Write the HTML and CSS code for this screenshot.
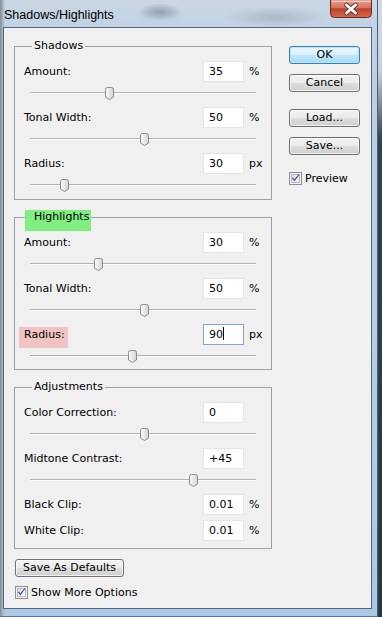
FILE: index.html
```html
<!DOCTYPE html>
<html lang="en">
<head>
  <meta charset="UTF-8" />
  <title>Shadows/Highlights</title>
  <link rel="stylesheet" href="styles.css">
</head>
<body>
  <svg class="defs" width="0" height="0" aria-hidden="true">
    <defs>
      <linearGradient id="thumbFill" x1="0" y1="0" x2="1" y2="0">
        <stop offset="0" stop-color="#fdfdfd" />
        <stop offset="1" stop-color="#d2d2d2" />
      </linearGradient>
      <linearGradient id="boxFill" x1="0" y1="0" x2="1" y2="1">
        <stop offset="0" stop-color="#d9dadc" />
        <stop offset="1" stop-color="#ffffff" />
      </linearGradient>
      <linearGradient id="closeFill" x1="0" y1="0" x2="0" y2="1">
        <stop offset="0" stop-color="#e8a593" />
        <stop offset="0.45" stop-color="#d0725e" />
        <stop offset="0.5" stop-color="#c2402a" />
        <stop offset="1" stop-color="#d46a4c" />
      </linearGradient>
    </defs>
  </svg>

  <div class="window">
    <div class="titlebar">
      <span class="title">Shadows/Highlights</span>
      <span class="close-btn" aria-label="Close">
        <svg width="42" height="18" viewBox="0 0 42 18">
          <path d="M0.5 0 V13.5 Q0.5 17.5 4.5 17.5 H37.5 Q41.5 17.5 41.5 13.5 V0" fill="url(#closeFill)" stroke="#6d2b20" />
          <path d="M2 1.5 H40" stroke="#f3c8bb" stroke-width="1" />
          <path d="M16.5 5 L25.5 13 M25.5 5 L16.5 13" stroke="#5a3a34" stroke-width="4.6" stroke-linecap="round" />
          <path d="M16.5 5 L25.5 13 M25.5 5 L16.5 13" stroke="#ffffff" stroke-width="2.8" stroke-linecap="round" />
        </svg>
      </span>
    </div>

    <div class="client">
      <div class="main">
        <fieldset class="group">
          <legend>Shadows</legend>
          <div class="field"><span class="label">Amount:</span><span class="box">35</span><span class="unit">%</span></div>
          <div class="slider"><div class="track"></div><span class="thumb" style="left: 35%"><svg width="9" height="13" viewBox="0 0 9 13"><path d="M0.5 2.5 Q0.5 0.5 2.5 0.5 H6.5 Q8.5 0.5 8.5 2.5 V10 L4.5 12.5 L0.5 10 Z" fill="url(#thumbFill)" stroke="#8a8a8a" /></svg></span></div>
          <div class="field"><span class="label">Tonal Width:</span><span class="box">50</span><span class="unit">%</span></div>
          <div class="slider"><div class="track"></div><span class="thumb" style="left: 50.4%"><svg width="9" height="13" viewBox="0 0 9 13"><path d="M0.5 2.5 Q0.5 0.5 2.5 0.5 H6.5 Q8.5 0.5 8.5 2.5 V10 L4.5 12.5 L0.5 10 Z" fill="url(#thumbFill)" stroke="#8a8a8a" /></svg></span></div>
          <div class="field"><span class="label">Radius:</span><span class="box">30</span><span class="unit">px</span></div>
          <div class="slider"><div class="track"></div><span class="thumb" style="left: 15%"><svg width="9" height="13" viewBox="0 0 9 13"><path d="M0.5 2.5 Q0.5 0.5 2.5 0.5 H6.5 Q8.5 0.5 8.5 2.5 V10 L4.5 12.5 L0.5 10 Z" fill="url(#thumbFill)" stroke="#8a8a8a" /></svg></span></div>
        </fieldset>

        <fieldset class="group">
          <legend class="mark-green">Highlights</legend>
          <div class="field"><span class="label">Amount:</span><span class="box">30</span><span class="unit">%</span></div>
          <div class="slider"><div class="track"></div><span class="thumb" style="left: 30%"><svg width="9" height="13" viewBox="0 0 9 13"><path d="M0.5 2.5 Q0.5 0.5 2.5 0.5 H6.5 Q8.5 0.5 8.5 2.5 V10 L4.5 12.5 L0.5 10 Z" fill="url(#thumbFill)" stroke="#8a8a8a" /></svg></span></div>
          <div class="field"><span class="label">Tonal Width:</span><span class="box">50</span><span class="unit">%</span></div>
          <div class="slider"><div class="track"></div><span class="thumb" style="left: 50.4%"><svg width="9" height="13" viewBox="0 0 9 13"><path d="M0.5 2.5 Q0.5 0.5 2.5 0.5 H6.5 Q8.5 0.5 8.5 2.5 V10 L4.5 12.5 L0.5 10 Z" fill="url(#thumbFill)" stroke="#8a8a8a" /></svg></span></div>
          <div class="field"><span class="label marked"><span class="mark-pink">Radius:</span></span><span class="box focused">90<span class="caret"></span></span><span class="unit">px</span></div>
          <div class="slider short"><div class="track"></div><span class="thumb" style="left: 45%"><svg width="9" height="13" viewBox="0 0 9 13"><path d="M0.5 2.5 Q0.5 0.5 2.5 0.5 H6.5 Q8.5 0.5 8.5 2.5 V10 L4.5 12.5 L0.5 10 Z" fill="url(#thumbFill)" stroke="#8a8a8a" /></svg></span></div>
        </fieldset>

        <fieldset class="group last">
          <legend>Adjustments</legend>
          <div class="field"><span class="label">Color Correction:</span><span class="box">0</span><span class="unit"></span></div>
          <div class="slider"><div class="track"></div><span class="thumb" style="left: 50.4%"><svg width="9" height="13" viewBox="0 0 9 13"><path d="M0.5 2.5 Q0.5 0.5 2.5 0.5 H6.5 Q8.5 0.5 8.5 2.5 V10 L4.5 12.5 L0.5 10 Z" fill="url(#thumbFill)" stroke="#8a8a8a" /></svg></span></div>
          <div class="field"><span class="label">Midtone Contrast:</span><span class="box">+45</span><span class="unit"></span></div>
          <div class="slider"><div class="track"></div><span class="thumb" style="left: 72%"><svg width="9" height="13" viewBox="0 0 9 13"><path d="M0.5 2.5 Q0.5 0.5 2.5 0.5 H6.5 Q8.5 0.5 8.5 2.5 V10 L4.5 12.5 L0.5 10 Z" fill="url(#thumbFill)" stroke="#8a8a8a" /></svg></span></div>
          <div class="field"><span class="label">Black Clip:</span><span class="box">0.01</span><span class="unit">%</span></div>
          <div class="field clip"><span class="label">White Clip:</span><span class="box">0.01</span><span class="unit">%</span></div>
        </fieldset>

        <button class="btn defaults">Save As Defaults</button>
        <label class="check more">
          <svg width="13" height="13" viewBox="0 0 13 13"><rect x="0.5" y="0.5" width="12" height="12" fill="#f4f4f4" stroke="#8f8f8f" /><rect x="2.5" y="2.5" width="8" height="8" fill="url(#boxFill)" stroke="#b9b9b9" /><path d="M3 6.2 L5.4 9.6 L10.6 2.6 L9.6 2.2 L5.3 7.6 L4.1 5.5 Z" fill="#3a4f9c" /></svg>
          Show More Options
        </label>
      </div>

      <div class="side">
        <button class="btn primary">OK</button>
        <button class="btn cancel">Cancel</button>
        <button class="btn load">Load...</button>
        <button class="btn save">Save...</button>
        <label class="check preview">
          <svg width="13" height="13" viewBox="0 0 13 13"><rect x="0.5" y="0.5" width="12" height="12" fill="#f4f4f4" stroke="#8f8f8f" /><rect x="2.5" y="2.5" width="8" height="8" fill="url(#boxFill)" stroke="#b9b9b9" /><path d="M3 6.2 L5.4 9.6 L10.6 2.6 L9.6 2.2 L5.3 7.6 L4.1 5.5 Z" fill="#3a4f9c" /></svg>
          Preview
        </label>
      </div>
    </div>
  </div>
</body>
</html>
```

FILE: styles.css
```css
body {
  margin: 0;
  font-family: "DejaVu Sans", sans-serif;
  font-size: 11px;
  color: #000;
  background: linear-gradient(#d3dae1 0, #c9d2da 70px, #33424a 140px, #2a383f 100%);
}
.defs {
  position: absolute;
  width: 0;
  height: 0;
}

/* aero frame */
.window {
  width: 378px;
  height: 617px;
  box-sizing: border-box;
  padding: 0 5px 7px 3px;
  display: flex;
  flex-direction: column;
  background:
    radial-gradient(ellipse 22px 9px at 160px 12px, rgba(80, 92, 104, 0.45), transparent),
    radial-gradient(ellipse 50px 10px at 275px 17px, rgba(110, 122, 134, 0.3), transparent),
    linear-gradient(to right, #7f8c98 0, #a9b9c8 3px, transparent 5px),
    linear-gradient(#cbd7e3 0, #c0d2e4 27px, #abc8e6 100%);
  border-right: 1px solid #46637d;
  border-bottom: 1px solid #5d7890;
}
.titlebar {
  flex-shrink: 0;
  height: 27px;
  display: flex;
  align-items: flex-start;
}
.title {
  font-family: "Liberation Sans", Arial, sans-serif;
  font-size: 12.5px;
  line-height: 14px;
  padding: 8px 0 0 1px;
}
.close-btn {
  margin-left: auto;
  width: 42px;
  height: 18px;
}
.close-btn svg {
  display: block;
}

.client {
  flex: 1;
  display: flex;
  border: 1px solid #56677a;
  background: #f0f0f0;
}
.main {
  width: 258px;
  padding: 11px 0 0 10px;
}
.side {
  width: 71px;
  margin-left: 17px;
  padding-top: 18px;
  display: flex;
  flex-direction: column;
}

/* group boxes */
.group {
  margin: 0 0 10px;
  padding: 8px 4px 0 9px;
  width: 258px;
  box-sizing: border-box;
  min-width: 0;
  border: 1px solid #a0a0a0;
}
.group.last {
  padding-bottom: 7px;
}
.group legend {
  margin-left: 8px;
  padding: 0 2px;
  line-height: 14px;
}
.mark-green {
  position: relative;
  z-index: 0;
}
.mark-green::before {
  content: "";
  position: absolute;
  left: -7px;
  right: 0;
  top: 0;
  bottom: -7px;
  background: #80ee80;
  z-index: -1;
}

.field {
  display: flex;
  align-items: center;
  height: 21px;
}
.field.clip {
  margin-top: 5px;
}
.label {
  flex: 1;
}
.label.marked {
  align-self: flex-start;
  margin-top: 3px;
}
.mark-pink {
  display: inline-block;
  line-height: 15px;
  padding: 0 3px 6px 5px;
  margin-left: -5px;
  background: #f2c3c3;
}
.box {
  width: 41px;
  height: 21px;
  box-sizing: border-box;
  border: 1px solid #e4e4e4;
  background: #fff;
  padding-left: 5px;
  line-height: 19px;
  white-space: nowrap;
}
.box.focused {
  border-color: #7aa7d6;
}
.caret {
  display: inline-block;
  width: 1px;
  height: 13px;
  background: #000;
  vertical-align: -2px;
}
.unit {
  width: 23px;
  padding-left: 5px;
  box-sizing: border-box;
}

/* sliders */
.slider {
  position: relative;
  height: 25px;
  box-sizing: border-box;
  padding-top: 10px;
  margin: 0 11px 0 6px;
}
.slider.short {
  height: 24px;
}
.track {
  height: 1px;
  background: #b2b2b2;
  border-bottom: 1px solid #fdfdfd;
}
.thumb {
  position: absolute;
  top: 5px;
  margin-left: -4px;
  width: 9px;
  height: 13px;
}
.thumb svg {
  display: block;
}

/* buttons */
.btn {
  font: inherit;
  color: #000;
  height: 18px;
  padding: 0;
  border: 1px solid #707070;
  border-radius: 3px;
  line-height: 16px;
  background: linear-gradient(#f2f2f2 0%, #ebebeb 50%, #dddddd 51%, #cfcfcf 100%);
  box-shadow: inset 0 0 0 1px rgba(255, 255, 255, 0.7);
}
.btn.primary {
  border-color: #3c7fb1;
  background: linear-gradient(#eaf6fd 0%, #d9f0fc 50%, #bee6fd 51%, #a7d9f5 100%);
  box-shadow: inset 0 0 0 1px #b8e4f8;
}
.btn.cancel,
.btn.save {
  margin-top: 10px;
}
.btn.load {
  margin-top: 17px;
}
.btn.defaults {
  display: block;
  width: 109px;
  margin: 0 0 0 1px;
}

.check {
  display: flex;
  align-items: center;
  gap: 3px;
  height: 13px;
}
.check svg {
  display: block;
}
.check.preview {
  margin-top: 17px;
}
.check.more {
  margin: 9px 0 0 1px;
}
```
